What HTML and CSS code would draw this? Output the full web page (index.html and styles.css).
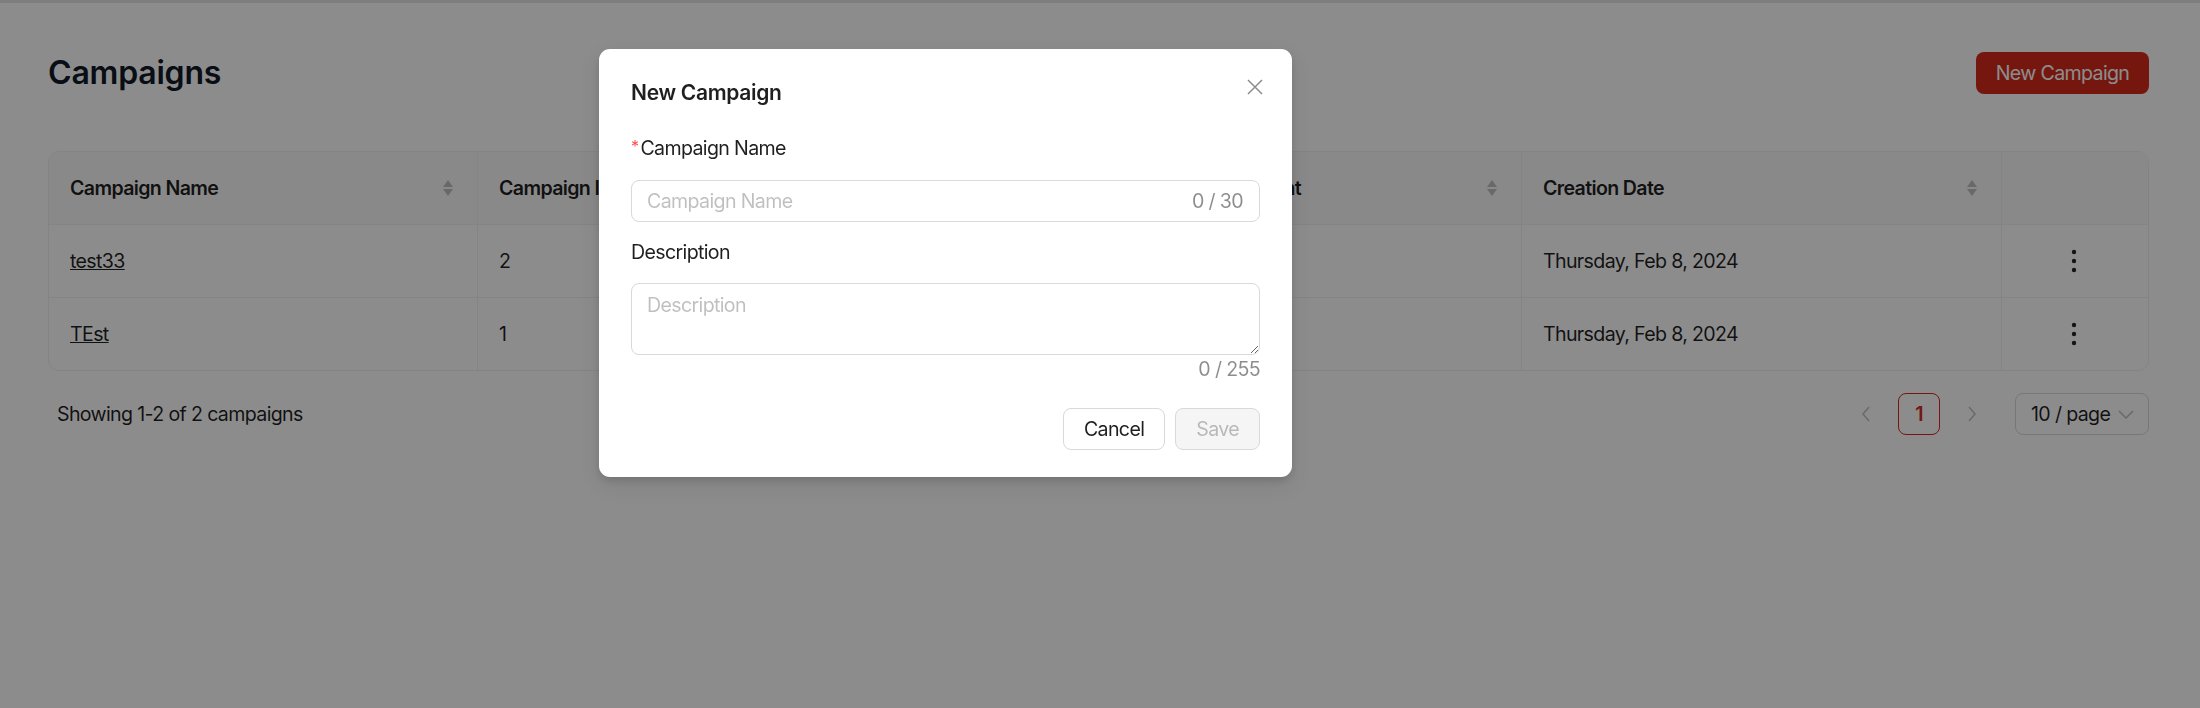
FILE: index.html
```html
<!DOCTYPE html>
<html lang="en">
<head>
<meta charset="utf-8">
<title>Campaigns</title>
<link rel="stylesheet" href="styles.css">
</head>
<body>
<div class="topbar"></div>
<main class="page">
  <header class="page-header">
    <h1 class="page-title">Campaigns</h1>
    <button class="btn-primary" type="button">New Campaign</button>
  </header>

  <div class="table-wrap">
    <table class="table">
      <colgroup>
        <col class="c1"><col class="c2"><col class="c3"><col class="c4"><col class="c5"><col class="c6">
      </colgroup>
      <thead>
        <tr>
          <th><div class="th-inner"><span>Campaign Name</span><svg class="sorter" viewBox="0 0 12 18" width="12" height="18"><path d="M6 1L11 8H1Z"/><path d="M6 17L11 10H1Z"/></svg></div></th>
          <th><div class="th-inner"><span>Campaign Items</span><svg class="sorter" viewBox="0 0 12 18" width="12" height="18"><path d="M6 1L11 8H1Z"/><path d="M6 17L11 10H1Z"/></svg></div></th>
          <th><div class="th-inner"><span>Status</span></div></th>
          <th><div class="th-inner"><span>Lead Count</span><svg class="sorter" viewBox="0 0 12 18" width="12" height="18"><path d="M6 1L11 8H1Z"/><path d="M6 17L11 10H1Z"/></svg></div></th>
          <th><div class="th-inner"><span>Creation Date</span><svg class="sorter" viewBox="0 0 12 18" width="12" height="18"><path d="M6 1L11 8H1Z"/><path d="M6 17L11 10H1Z"/></svg></div></th>
          <th></th>
        </tr>
      </thead>
      <tbody>
        <tr>
          <td><a class="link" href="#">test33</a></td>
          <td>2</td>
          <td>Active</td>
          <td>0</td>
          <td>Thursday, Feb 8, 2024</td>
          <td class="actions"><svg class="kebab" viewBox="0 0 6 24" width="6" height="24"><circle cx="3" cy="3" r="2.2"/><circle cx="3" cy="12" r="2.2"/><circle cx="3" cy="21" r="2.2"/></svg></td>
        </tr>
        <tr>
          <td><a class="link" href="#">TEst</a></td>
          <td>1</td>
          <td>Active</td>
          <td>0</td>
          <td>Thursday, Feb 8, 2024</td>
          <td class="actions"><svg class="kebab" viewBox="0 0 6 24" width="6" height="24"><circle cx="3" cy="3" r="2.2"/><circle cx="3" cy="12" r="2.2"/><circle cx="3" cy="21" r="2.2"/></svg></td>
        </tr>
      </tbody>
    </table>
  </div>

  <div class="table-footer">
    <div class="showing">Showing 1-2 of 2 campaigns</div>
    <div class="pagination">
      <span class="page-nav"><svg viewBox="0 0 10 16" width="10" height="16"><path d="M8 1L2 8L8 15"/></svg></span>
      <span class="page-item">1</span>
      <span class="page-nav"><svg viewBox="0 0 10 16" width="10" height="16"><path d="M2 1L8 8L2 15"/></svg></span>
      <span class="page-size"><span>10 / page</span><svg viewBox="0 0 16 10" width="16" height="10"><path d="M1 2L8 9L15 2"/></svg></span>
    </div>
  </div>
</main>

<div class="mask"></div>

<div class="modal" role="dialog">
  <button class="modal-close" type="button" aria-label="Close"><svg viewBox="0 0 16 16" width="16" height="16"><path d="M1 1L15 15M15 1L1 15"/></svg></button>
  <div class="modal-title">New Campaign</div>
  <form class="form">
    <div class="form-item">
      <label class="form-label"><span class="req">*</span>Campaign Name</label>
      <div class="input-affix"><input class="input" type="text" placeholder="Campaign Name"><span class="count">0 / 30</span></div>
    </div>
    <div class="form-item">
      <label class="form-label">Description</label>
      <textarea class="textarea" placeholder="Description"></textarea>
      <div class="count-below">0 / 255</div>
    </div>
    <div class="modal-footer">
      <button class="btn" type="button">Cancel</button>
      <button class="btn btn-disabled" type="button" disabled>Save</button>
    </div>
  </form>
</div>
</body>
</html>
```
FILE: styles.css
```css
* { box-sizing: border-box; }
html, body { margin: 0; height: 100%; }
body {
  font-family: Inter, "Liberation Sans", Arial, sans-serif;
  font-size: 19.6px;
  line-height: 28px;
  letter-spacing: -0.65px;
  color: rgba(0, 0, 0, 0.88);
  background: #fff;
  overflow: hidden;
}

.topbar { height: 3px; background: #e6e6e6; }

.page { padding: 49px 51px 0 48px; }

.page-header {
  display: flex;
  justify-content: space-between;
  align-items: center;
  height: 42px;
}
.page-title {
  margin: 0;
  font-size: 32px;
  font-weight: 600;
  line-height: 42px;
  color: #111827;
  letter-spacing: -0.2px;
}
.btn-primary {
  width: 173px;
  height: 42px;
  border: 0;
  border-radius: 8px;
  background: #d52a1c;
  color: #fff;
  font-family: inherit;
  font-size: 19.6px;
  letter-spacing: inherit;
}

.table-wrap {
  margin-top: 57px;
  border: 1px solid #f0f0f0;
  border-radius: 11px;
  overflow: hidden;
}
.table {
  width: 100%;
  table-layout: fixed;
  border-collapse: separate;
  border-spacing: 0;
}
.c1 { width: 429px; }
.c2 { width: 350px; }
.c3 { width: 350px; }
.c4 { width: 344px; }
.c5 { width: 480px; }
.c6 { width: 148px; }

.table th, .table td {
  padding: 22px 21px;
  text-align: left;
  line-height: 28px;
  border-bottom: 1px solid #f0f0f0;
  border-right: 1px solid #f0f0f0;
  white-space: nowrap;
}
.table th:last-child, .table td:last-child { border-right: 0; }
.table tbody tr:last-child td { border-bottom: 0; }
.table th { background: #fafafa; font-weight: 600; }

.th-inner { display: flex; align-items: center; justify-content: space-between; }
.sorter { fill: #bfbfbf; margin-right: 2px; }

.link { color: rgba(0, 0, 0, 0.88); text-decoration: underline; }

.actions { text-align: center !important; padding-top: 0; padding-bottom: 0; vertical-align: middle; }
.kebab { fill: #262626; display: block; margin: 0 auto; position: relative; left: -2px; }

.table-footer {
  display: flex;
  justify-content: space-between;
  align-items: center;
  margin-top: 22px;
  padding-left: 9px;
}
.pagination { display: flex; align-items: center; gap: 11px; }
.page-nav {
  width: 42px; height: 42px;
  display: flex; align-items: center; justify-content: center;
}
.page-nav svg, .page-size svg { fill: none; stroke: rgba(0, 0, 0, 0.25); stroke-width: 1.5; }
.page-item {
  width: 42px; height: 42px;
  border: 1px solid #d52a1c;
  border-radius: 8px;
  color: #d52a1c;
  font-weight: 600;
  display: flex; align-items: center; justify-content: center;
}
.page-size {
  margin-left: 11px;
  width: 134px; height: 42px;
  border: 1px solid #d9d9d9;
  border-radius: 8px;
  display: flex; align-items: center; justify-content: space-between;
  padding: 0 14px 0 15px;
}

.mask {
  position: fixed;
  inset: 0;
  background: rgba(0, 0, 0, 0.45);
}

.modal {
  position: absolute;
  left: 599px;
  top: 49px;
  width: 693px;
  padding: 27px 32px 27px;
  background: #fff;
  border-radius: 11px;
  box-shadow: 0 8px 22px rgba(0, 0, 0, 0.08), 0 4px 8px rgba(0, 0, 0, 0.12);
}
.modal-close {
  position: absolute;
  top: 23px;
  right: 22px;
  width: 30px; height: 30px;
  border: 0; background: transparent; padding: 0;
  display: flex; align-items: center; justify-content: center;
}
.modal-close svg { fill: none; stroke: rgba(0, 0, 0, 0.45); stroke-width: 1.5; }
.modal-title {
  font-size: 21px;
  font-weight: 600;
  line-height: 33.6px;
  letter-spacing: -0.3px;
  color: rgba(0, 0, 0, 0.88);
}
.form { margin-top: 23px; }
.form-item { margin-bottom: 15px; }
.form-label {
  display: block;
  line-height: 30.8px;
  margin-bottom: 15.6px;
}
.req { color: #ff4d4f; font-size: 16px; margin-right: 2px; position: relative; top: -3px; }
.input-affix {
  display: flex;
  align-items: center;
  height: 42px;
  border: 1px solid #d9d9d9;
  border-radius: 8px;
  padding: 0 16px 0 15px;
}
.input {
  flex: 1;
  min-width: 0;
  border: 0;
  outline: none;
  padding: 0;
  font-family: inherit;
  font-size: 19.6px;
  letter-spacing: inherit;
  color: rgba(0, 0, 0, 0.88);
  background: transparent;
}
.input::placeholder, .textarea::placeholder { color: rgba(0, 0, 0, 0.25); }
.count { color: rgba(0, 0, 0, 0.45); }
.textarea {
  display: block;
  width: 100%;
  height: 72px;
  border: 1px solid #d9d9d9;
  border-radius: 8px;
  padding: 7px 15px;
  font-family: inherit;
  font-size: 19.6px;
  letter-spacing: inherit;
  line-height: 28px;
  resize: vertical;
  outline: none;
}
.count-below { text-align: right; color: rgba(0, 0, 0, 0.45); line-height: 28px; }
.modal-footer {
  display: flex;
  justify-content: flex-end;
  gap: 10px;
  margin-top: 24.6px;
}
.btn {
  height: 42px;
  padding: 0 20px;
  border: 1px solid #d9d9d9;
  border-radius: 8px;
  background: #fff;
  font-family: inherit;
  font-size: 19.6px;
  letter-spacing: inherit;
  color: rgba(0, 0, 0, 0.88);
}
.btn-disabled {
  background: rgba(0, 0, 0, 0.04);
  color: rgba(0, 0, 0, 0.25);
  padding: 0 20px;
}
```
